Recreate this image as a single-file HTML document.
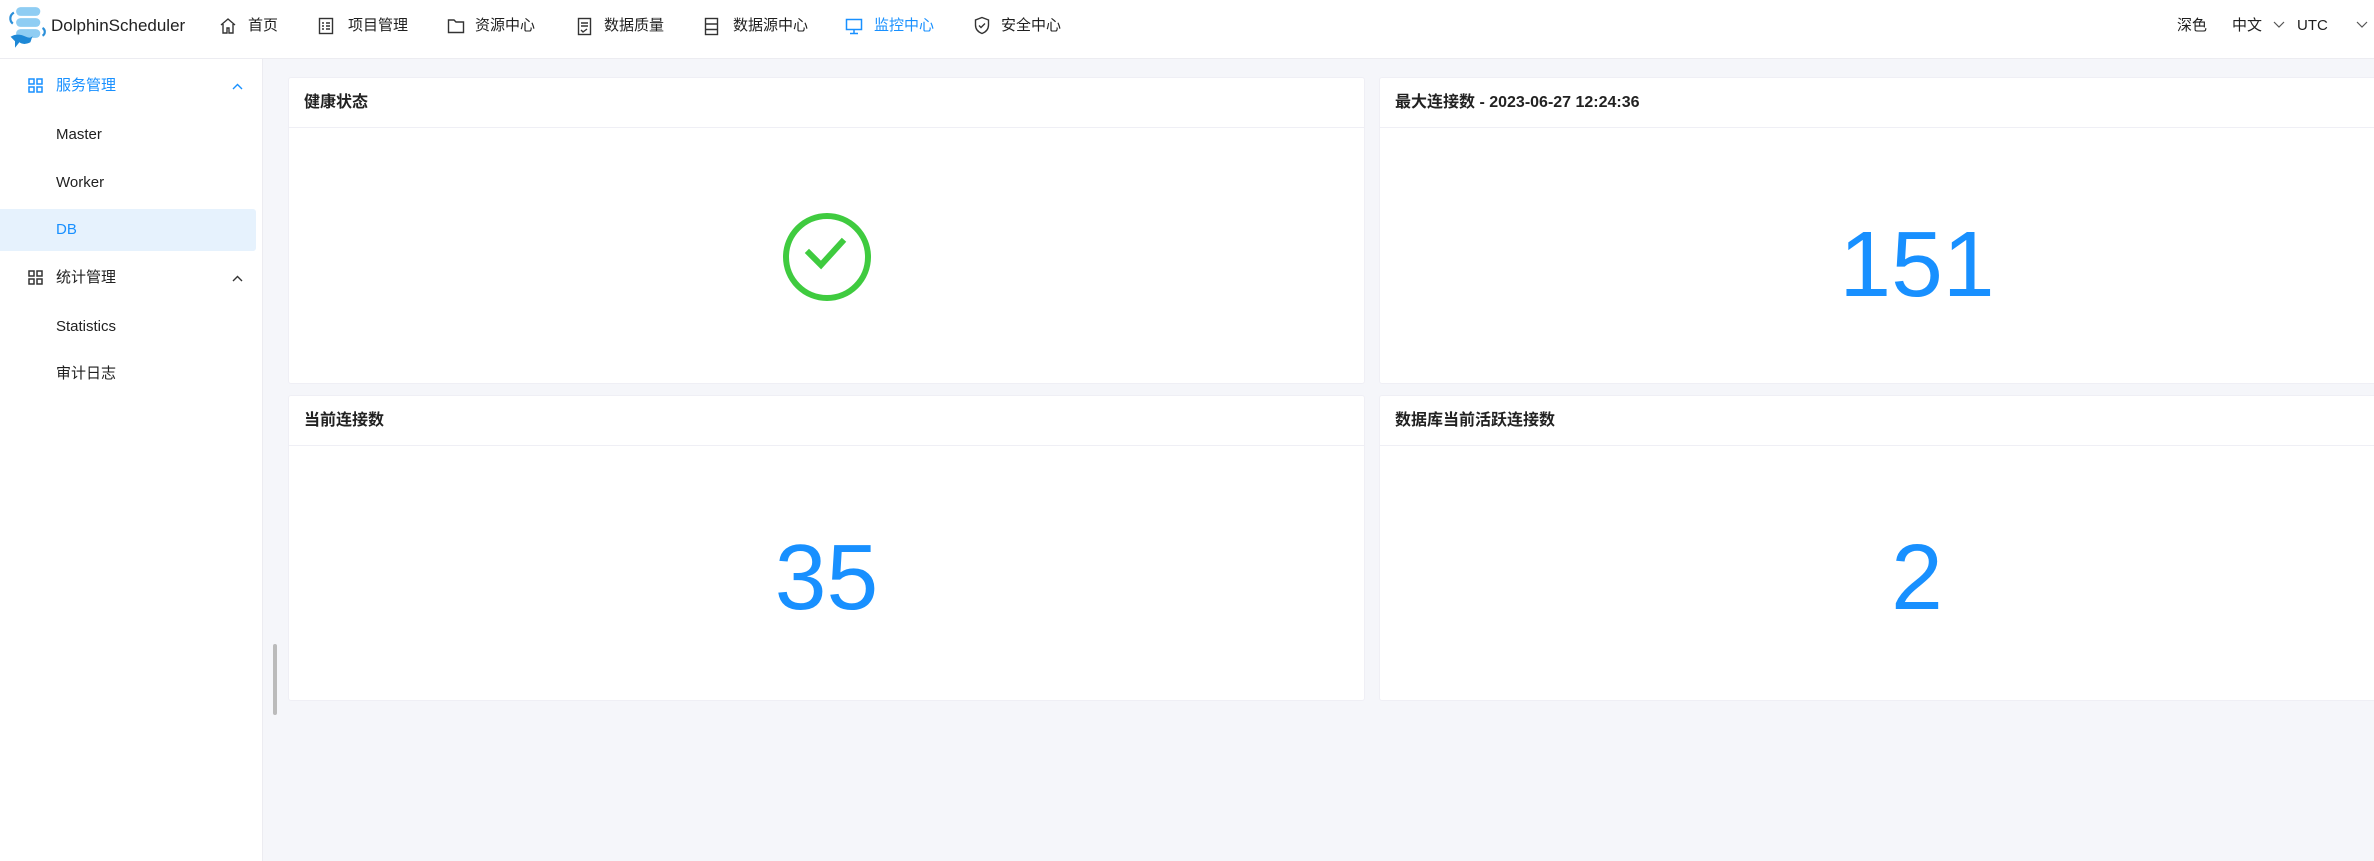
<!DOCTYPE html>
<html><head><meta charset="utf-8"><style>
*{margin:0;padding:0;box-sizing:border-box}
body{width:2374px;height:861px;overflow:hidden;background:#f5f6fa;font-family:"Liberation Sans","Noto Sans CJK SC",sans-serif;color:#1f1f1f;position:relative}
.hdr{position:absolute;left:0;top:0;width:2374px;height:59px;background:#fff;border-bottom:1px solid #ececf1}
.t{position:absolute;white-space:nowrap;font-size:15px;line-height:20px}
.side{position:absolute;left:0;top:59px;width:263px;height:802px;background:#fff;border-right:1px solid #ececf1}
.card{position:absolute;background:#fff;border:1px solid #efeff5;border-radius:3px}
.card .h{height:50px;border-bottom:1px solid #efeff5;padding-left:15px;font-size:16px;font-weight:bold;line-height:50px;color:#222}
.num{position:absolute;color:#1890ff;font-size:93px;line-height:100px;text-align:center;width:100%}
svg{position:absolute}
</style></head><body>
<div class="hdr">
<svg style="left:6px;top:6px" width="40" height="44" viewBox="0 0 36 40">
<rect x="9" y="1" width="22" height="8" rx="4" fill="#8fcdf3"/>
<rect x="9" y="11" width="22" height="8" rx="4" fill="#8fcdf3"/>
<rect x="9" y="21" width="22" height="8" rx="4" fill="#8fcdf3"/>
<path d="M7 6 A6 6 0 0 0 6 16" stroke="#2b8fd9" stroke-width="2" fill="none"/>
<path d="M33 20 A4 4 0 0 1 33 27" stroke="#2b8fd9" stroke-width="2" fill="none"/>
<path d="M4 28 Q10 24 18 28 Q22 30 24 27 L22 33 Q16 36 12 33 L8 38 L8 32 Z" fill="#1e88d6"/>
</svg>
<div class="t" style="left:51px;top:16px;font-size:17px;color:#222">DolphinScheduler</div>
<svg style="left:219px;top:17px" width="18" height="18" viewBox="0 0 18 18" fill="none" stroke="#333" stroke-width="1.4"><path d="M2 8 L9 2 L16 8 M4 7 V16 H8 V11 H10 V16 H14 V7"/></svg>
<div class="t" style="left:248px;top:16px">首页</div>
<svg style="left:318px;top:17px" width="16" height="18" viewBox="0 0 16 18" fill="none" stroke="#333" stroke-width="1.4"><rect x="1.5" y="1.5" width="13" height="15"/><path d="M4 6h2M8 6h4M4 9h2M8 9h4M4 12h2M8 12h4"/></svg>
<div class="t" style="left:348px;top:16px">项目管理</div>
<svg style="left:447px;top:18px" width="18" height="16" viewBox="0 0 18 16" fill="none" stroke="#333" stroke-width="1.4"><path d="M1.5 2 H7 L9 4 H16.5 V14.5 H1.5 Z"/></svg>
<div class="t" style="left:475px;top:16px">资源中心</div>
<svg style="left:577px;top:17px" width="15" height="19" viewBox="0 0 15 19" fill="none" stroke="#333" stroke-width="1.4"><rect x="1.5" y="1.5" width="12" height="16"/><path d="M4 6h7M4 9h7M4 13l2 2 4-3"/></svg>
<div class="t" style="left:604px;top:16px">数据质量</div>
<svg style="left:704px;top:17px" width="15" height="19" viewBox="0 0 15 19" fill="none" stroke="#333" stroke-width="1.4"><rect x="1.5" y="1.5" width="12" height="16"/><path d="M1.5 7h12M1.5 12.5h12"/></svg>
<div class="t" style="left:733px;top:16px">数据源中心</div>
<svg style="left:845px;top:18px" width="18" height="17" viewBox="0 0 18 17" fill="none" stroke="#1890ff" stroke-width="1.5"><rect x="1.5" y="1.5" width="15" height="10"/><path d="M9 11.5v4M5 15.5h8"/></svg>
<div class="t" style="left:874px;top:16px;color:#1890ff">监控中心</div>
<svg style="left:974px;top:16px" width="16" height="19" viewBox="0 0 16 19" fill="none" stroke="#333" stroke-width="1.4"><path d="M8 1.5 L14.5 4 V9 Q14.5 15 8 17.5 Q1.5 15 1.5 9 V4 Z"/><path d="M5 9.5l2 2 4-4"/></svg>
<div class="t" style="left:1001px;top:16px">安全中心</div>
<div class="t" style="left:2177px;top:16px">深色</div>
<div class="t" style="left:2232px;top:16px">中文</div>
<svg style="left:2273px;top:21px" width="12" height="8" viewBox="0 0 12 8" fill="none" stroke="#555" stroke-width="1.2"><path d="M1 1l5 5 5-5"/></svg>
<div class="t" style="left:2297px;top:16px">UTC</div>
<svg style="left:2356px;top:21px" width="12" height="8" viewBox="0 0 12 8" fill="none" stroke="#555" stroke-width="1.2"><path d="M1 1l5 5 5-5"/></svg>
</div>

<div class="side">
<svg style="left:28px;top:19px" width="15" height="15" viewBox="0 0 15 15" fill="none" stroke="#1890ff" stroke-width="1.5"><rect x="1" y="1" width="5" height="5"/><rect x="9" y="1" width="5" height="5"/><rect x="1" y="9" width="5" height="5"/><rect x="9" y="9" width="5" height="5"/></svg>
<div class="t" style="left:56px;top:17px;color:#1890ff">服务管理</div>
<svg style="left:232px;top:24px" width="11" height="7" viewBox="0 0 11 7" fill="none" stroke="#1890ff" stroke-width="1.4"><path d="M1 6l4.5-4.5L10 6"/></svg>
<div class="t" style="left:56px;top:66px">Master</div>
<div class="t" style="left:56px;top:114px">Worker</div>
<div style="position:absolute;left:0;top:150px;width:256px;height:42px;background:#e6f2fd;border-radius:0 3px 3px 0"></div>
<div class="t" style="left:56px;top:161px;color:#1890ff">DB</div>
<svg style="left:28px;top:211px" width="15" height="15" viewBox="0 0 15 15" fill="none" stroke="#333" stroke-width="1.5"><rect x="1" y="1" width="5" height="5"/><rect x="9" y="1" width="5" height="5"/><rect x="1" y="9" width="5" height="5"/><rect x="9" y="9" width="5" height="5"/></svg>
<div class="t" style="left:56px;top:209px">统计管理</div>
<svg style="left:232px;top:216px" width="11" height="7" viewBox="0 0 11 7" fill="none" stroke="#333" stroke-width="1.4"><path d="M1 6l4.5-4.5L10 6"/></svg>
<div class="t" style="left:56px;top:258px">Statistics</div>
<div class="t" style="left:56px;top:305px">审计日志</div>
</div>
<div style="position:absolute;left:273px;top:644px;width:4px;height:71px;background:#bbb;border-radius:2px"></div>

<div class="card" style="left:288px;top:77px;width:1077px;height:307px">
<div class="h">健康状态</div>
<svg style="left:493px;top:134px" width="90" height="90" viewBox="0 0 90 90" fill="none" stroke="#3fcb3f" stroke-width="6"><circle cx="45" cy="45" r="41"/><path d="M27 41 L39 53 L60 30" stroke-linecap="square"/></svg>
</div>
<div class="card" style="left:1379px;top:77px;width:1000px;height:307px">
<div class="h">最大连接数 - 2023-06-27 12:24:36</div>
<div class="num" style="left:38px;top:136px">151</div>
</div>
<div class="card" style="left:288px;top:395px;width:1077px;height:306px">
<div class="h">当前连接数</div>
<div class="num" style="left:0;top:131px">35</div>
</div>
<div class="card" style="left:1379px;top:395px;width:1000px;height:306px">
<div class="h">数据库当前活跃连接数</div>
<div class="num" style="left:38px;top:131px">2</div>
</div>
</body></html>
